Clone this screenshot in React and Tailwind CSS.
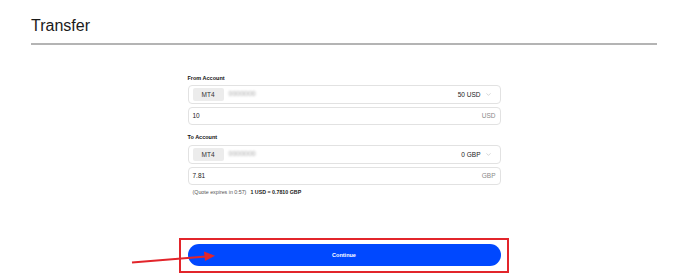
import { ChevronDown } from 'lucide-react';

function AccountSelect({ balance }) {
  return (
    <div className="h-[19px] flex items-center border border-[#e2e2e2] rounded-[4px] pl-[4px] pr-[8px]">
      <div className="h-[13px] w-[31px] flex items-center justify-center bg-[#ececec] rounded-[2px] text-[6.5px] text-[#333]">
        MT4
      </div>
      <span className="ml-[5px] text-[7px] text-[#a8a8a8] blur-[1.2px]">0000000</span>
      <span className="ml-auto text-[6.5px] text-[#222]">{balance}</span>
      <ChevronDown className="ml-[4px] text-[#a0a0a0]" size={7} strokeWidth={1.5} />
    </div>
  );
}

function AmountInput({ value, currency }) {
  return (
    <div className="mt-[3px] h-[18px] flex items-center border border-[#e2e2e2] rounded-[4px] px-[4px]">
      <span className="text-[6.5px] text-[#222]">{value}</span>
      <span className="ml-auto text-[6.5px] text-[#8a8a8a]">{currency}</span>
    </div>
  );
}

export default function App() {
  return (
    <div className="w-[688px] h-[278px] bg-white relative overflow-hidden font-['Liberation_Sans',Arial,sans-serif]">
      <div className="mx-[31px] pt-[16px] pb-[7px] border-b-2 border-[#b4b4b4]">
        <h1 className="text-[16px] leading-[20px] text-[#1a1a1a]">Transfer</h1>
      </div>

      <div className="w-[313px] mx-auto flex flex-col">
        <div className="mt-[29px] h-[9px] leading-[9px] text-[5.5px] font-bold text-[#111]">From Account</div>
        <div className="mt-[2px]">
          <AccountSelect balance="50 USD" />
        </div>
        <AmountInput value="10" currency="USD" />

        <div className="mt-[8px] h-[9px] leading-[9px] text-[5.5px] font-bold text-[#111]">To Account</div>
        <div className="mt-[3px]">
          <AccountSelect balance="0 GBP" />
        </div>
        <AmountInput value="7.81" currency="GBP" />

        <div className="mt-[3px] h-[8px] leading-[8px] pl-[5px] text-[5.3px] text-[#555]">
          (Quote expires in 0:57)
          <span className="ml-[4px] font-bold text-[#222]">1 USD = 0.7810 GBP</span>
        </div>

        <button className="mt-[48px] h-[22px] w-full rounded-full bg-[#0048ff] text-white text-[5.5px] font-semibold">
          Continue
        </button>
      </div>

      <div className="absolute left-[179px] top-[238px] w-[330px] h-[35px] border-2 border-[#e2252b] pointer-events-none" />

      <svg className="absolute left-0 top-0 pointer-events-none" width="688" height="278">
        <line x1="132" y1="262.5" x2="206" y2="256.5" stroke="#e2252b" strokeWidth="2" />
        <polygon points="215,255.8 204,251.5 205,261" fill="#e2252b" />
      </svg>
    </div>
  );
}
